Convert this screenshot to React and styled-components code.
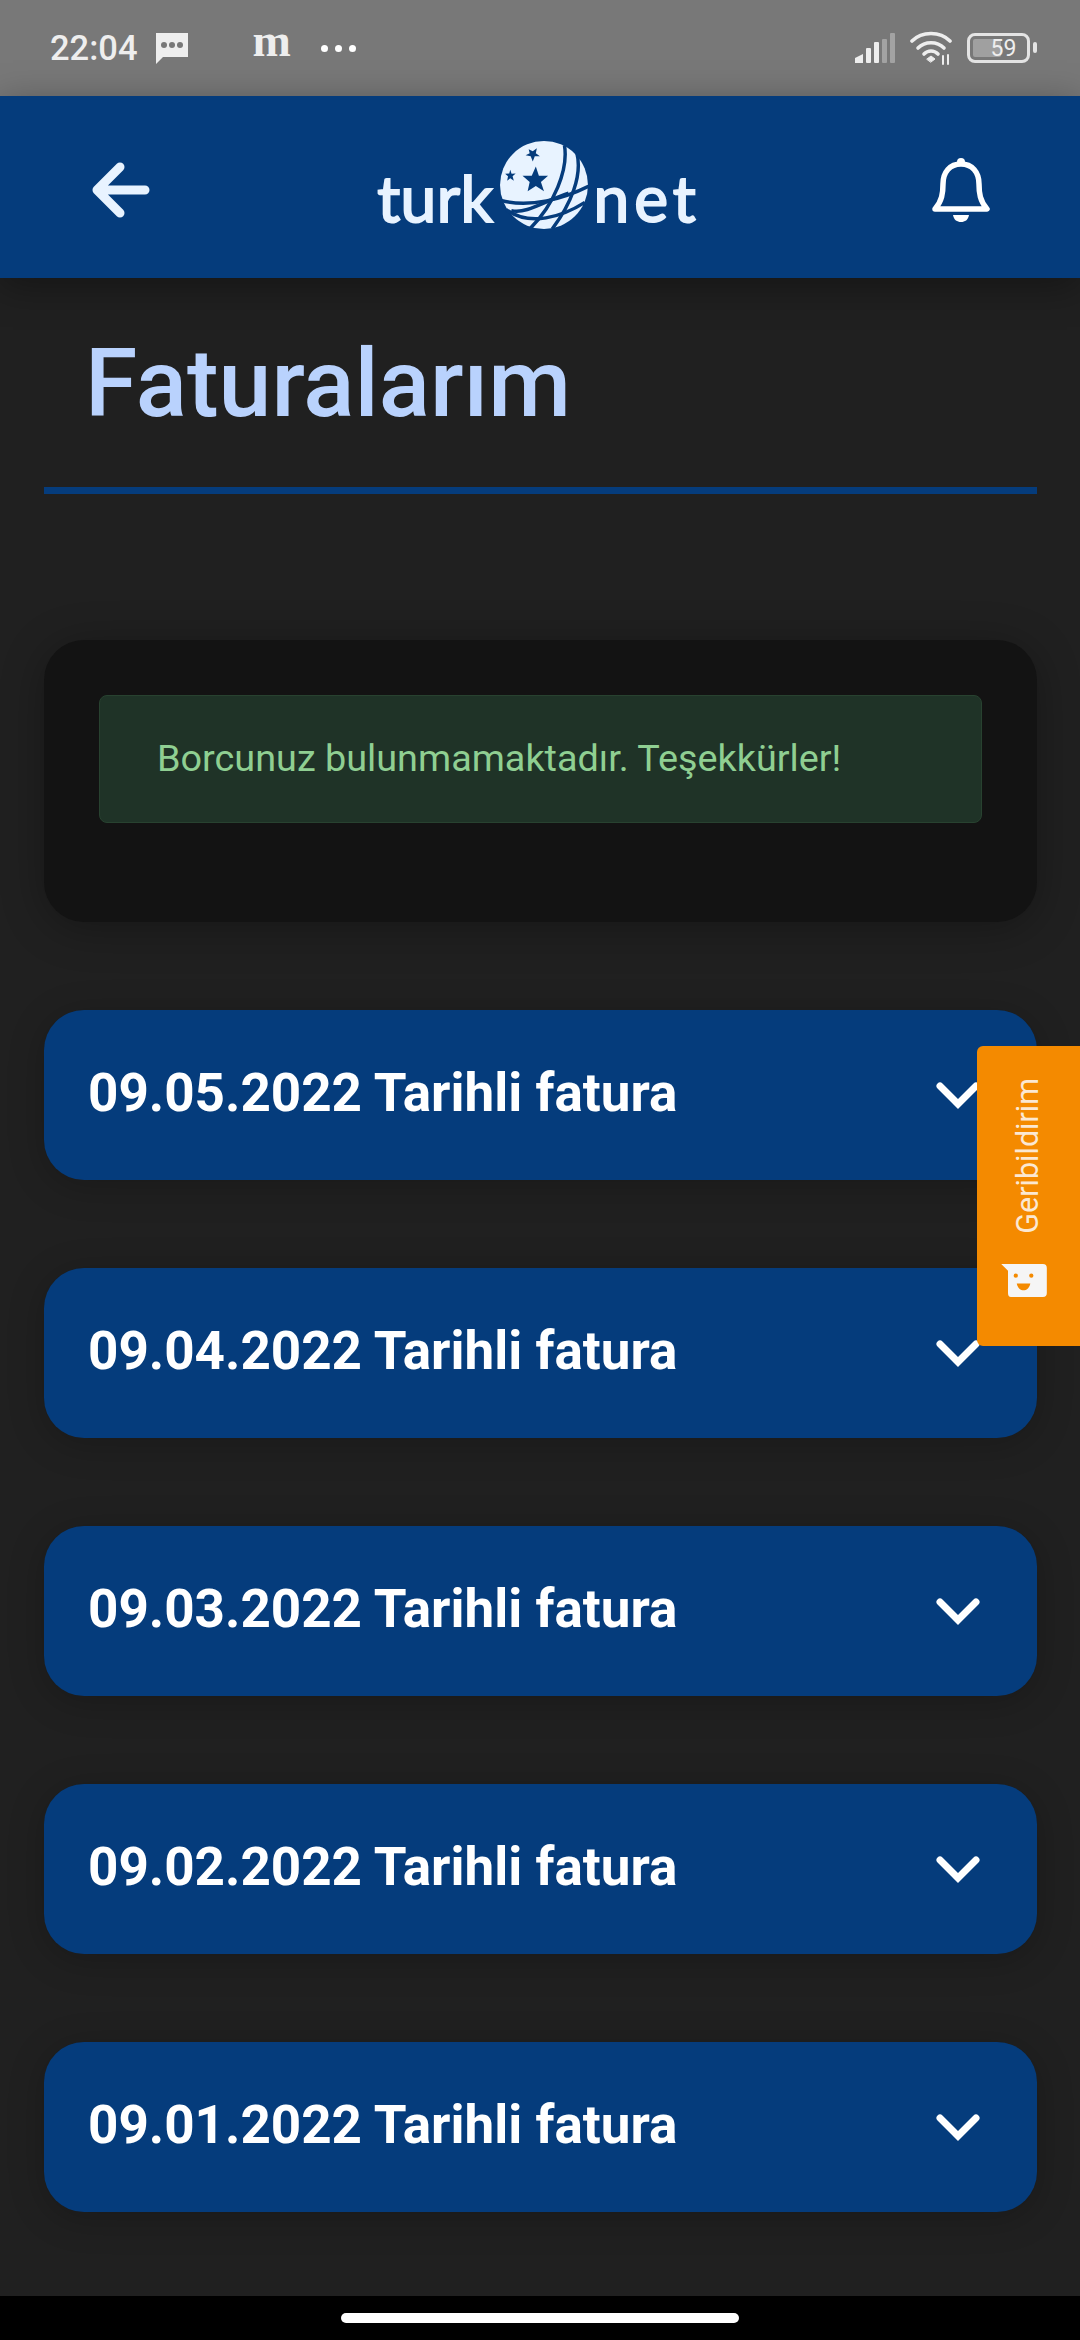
import React from 'react';
import styled, { createGlobalStyle } from 'styled-components';

const GlobalStyle = createGlobalStyle`
  html, body {
    margin: 0;
    padding: 0;
    width: 1080px;
    height: 2340px;
    overflow: hidden;
    background: #202020;
    font-family: Roboto, "Noto Sans", sans-serif;
  }
  * { box-sizing: border-box; }
`;

const Page = styled.div`
  position: relative;
  width: 1080px;
  height: 2340px;
  display: flex;
  flex-direction: column;
  overflow: hidden;
`;

const StatusBar = styled.div`
  height: 96px;
  flex: none;
  background: #787878;
  display: flex;
  align-items: center;
  padding: 0 44px 0 50px;
  color: #eeeeee;
`;

const Time = styled.span`
  font-size: 34.5px;
  font-weight: 500;
  line-height: 1;
`;

const LeftIcons = styled.div`
  display: flex;
  align-items: center;
  margin-left: 17px;
`;

const MailLetter = styled.span`
  font-family: "Liberation Serif", serif;
  font-weight: 700;
  font-size: 46px;
  line-height: 1;
  margin: -14px 0 0 65px;
`;

const Dots = styled.div`
  display: flex;
  gap: 7px;
  margin-left: 30px;
`;

const Dot = styled.i`
  width: 7px;
  height: 7px;
  border-radius: 50%;
  background: #fff;
`;

const RightIcons = styled.div`
  margin-left: auto;
  display: flex;
  align-items: center;
  gap: 15px;
`;

const Battery = styled.div`
  position: relative;
  width: 63px;
  height: 30px;
  border: 3.5px solid #e4e4e4;
  border-radius: 8px;
  margin-right: 6px;
  display: flex;
  align-items: center;
  justify-content: center;
  font-size: 23px;
  color: #eeeeee;
  &::before {
    content: '';
    position: absolute;
    left: 3px;
    top: 3px;
    bottom: 3px;
    width: 28px;
    background: #a0a0a0;
    border-radius: 2px;
  }
  &::after {
    content: '';
    position: absolute;
    right: -10px;
    top: 6px;
    width: 4px;
    height: 11px;
    background: #e4e4e4;
    border-radius: 2px;
  }
`;

const BatteryText = styled.span`
  position: relative;
  margin-left: 10px;
`;

const AppBar = styled.header`
  height: 182px;
  flex: none;
  background: #053c7c;
  display: flex;
  align-items: center;
  justify-content: space-between;
  padding: 5px 90px 0 92px;
  box-shadow: 0 8px 36px rgba(0, 0, 0, 0.35);
  position: relative;
`;

const Logo = styled.div`
  display: flex;
  align-items: center;
  gap: 5px;
  color: #e8f3ff;
  margin: 0 0 10px -4px;
`;

const LogoWord = styled.span`
  font-family: Lato, sans-serif;
  font-weight: 400;
  font-size: 64px;
  line-height: 1;
  letter-spacing: ${(p) => p.$spacing}px;
  margin-top: 26px;
  -webkit-text-stroke: 2px #e8f3ff;
`;

const Main = styled.main`
  flex: 1;
  padding: 0 43px 0 44px;
  display: flex;
  flex-direction: column;
`;

const Title = styled.h1`
  margin: 0;
  padding: 50px 0 0 41px;
  height: 216px;
  border-bottom: 7px solid #053c7c;
  color: #b9d2fd;
  font-size: 95px;
  font-weight: 500;
  line-height: 112px;
`;

const Card = styled.section`
  margin-top: 146px;
  height: 282px;
  border-radius: 40px;
  background: #131313;
  padding: 55px;
  box-shadow: 0 6px 44px rgba(0, 0, 0, 0.3);
`;

const Alert = styled.div`
  height: 128px;
  background: #1f3327;
  border: 1px solid #284230;
  border-radius: 8px;
  padding: 0 57px 2px;
  display: flex;
  align-items: center;
  color: #8fcf92;
  font-size: 37.8px;
`;

const List = styled.div`
  margin-top: 88px;
  display: flex;
  flex-direction: column;
  gap: 88px;
`;

const Row = styled.div`
  height: 170px;
  border-radius: 40px;
  background: #053c7c;
  display: flex;
  align-items: center;
  justify-content: space-between;
  padding: 0 57px 0 44px;
  color: #ffffff;
  box-shadow: 0 6px 36px rgba(0, 0, 0, 0.22);
`;

const RowLabel = styled.span`
  font-size: 53px;
  font-weight: 700;
  margin-bottom: 4px;
`;

const NavBar = styled.div`
  height: 44px;
  flex: none;
  background: #000;
  display: flex;
  justify-content: center;
  padding-top: 17px;
`;

const HomePill = styled.div`
  width: 398px;
  height: 10px;
  border-radius: 5px;
  background: #fff;
`;

const Feedback = styled.aside`
  position: absolute;
  right: 0;
  top: 1046px;
  width: 103px;
  height: 300px;
  background: #f48a00;
  border-radius: 6px 0 0 6px;
  display: flex;
  flex-direction: column;
  align-items: center;
  justify-content: space-between;
  padding: 32px 0 49px;
`;

const FeedbackLabel = styled.span`
  writing-mode: vertical-rl;
  transform: rotate(180deg);
  color: #fbe8d2;
  font-size: 30.5px;
  line-height: 1;
`;

const FeedbackSvg = styled.svg`
  margin-right: 8px;
`;

const BackIcon = () => (
  <svg width="58" height="56" viewBox="0 0 58 56" fill="none" stroke="#e8f3ff" strokeWidth="9" strokeLinecap="round" strokeLinejoin="round">
    <path d="M28 5 L5 28 L28 51 M5 28 H53" />
  </svg>
);

const BellIcon = () => (
  <svg width="58" height="66" viewBox="0 0 58 66" fill="none">
    <circle cx="29" cy="5" r="4" fill="#fff" />
    <path d="M3 52 C10 44 11 36 11 27 C11 15 18 7 29 7 C40 7 47 15 47 27 C47 36 48 44 55 52 Z" stroke="#fff" strokeWidth="5.5" strokeLinejoin="round" />
    <path d="M21 58 H37 C36 63 33 65 29 65 C25 65 22 63 21 58 Z" fill="#fff" />
  </svg>
);

const Globe = () => (
  <svg width="90" height="88" viewBox="0 0 88 86">
    <circle cx="44" cy="43" r="43" fill="#e8f3ff" />
    <g fill="#053c7c">
      <path d="M29 8 l4 2 4 -3 -1 5 4 3 -5 0 -2 5 -2 -5 -5 -1 4 -2z" />
      <path d="M36 25 l3 9 9 0 -7 6 3 9 -8 -5 -8 5 2 -9 -7 -6 9 0z" />
      <path d="M11 28 l1.3 4 4 -.3 -3 2.8 1.2 4.3 -3.5 -2.3 -3 2.3 .8 -4.3 -2.8 -2.5 4 -.2z" />
    </g>
    <g fill="none" stroke="#053c7c" strokeWidth="3.4">
      <path d="M64 4 C68 28 54 62 30 86" />
      <path d="M76 11 C82 34 70 62 52 86" />
      <path d="M2 58 C30 66 64 56 88 44" />
      <path d="M7 67 C30 84 62 74 84 60" />
      <path d="M12 68 C26 72 46 58 68 51" />
    </g>
  </svg>
);

const MessageIcon = () => (
  <svg width="33" height="32" viewBox="0 0 33 32" style={{ display: 'block' }}>
    <path d="M1 1 H33 V25 H8 L1 32 Z" fill="#eeeeee" />
    <g fill="#787878">
      <circle cx="9" cy="13" r="3" />
      <circle cx="17" cy="13" r="3" />
      <circle cx="25" cy="13" r="3" />
    </g>
  </svg>
);

const SignalIcon = () => (
  <svg width="40" height="30" viewBox="0 0 40 30" style={{ display: 'block' }}>
    <path d="M0 30 V25 L8 21 V30 Z" fill="#eeeeee" />
    <rect x="11" y="15" width="5" height="15" rx="1" fill="#eeeeee" />
    <rect x="19" y="9" width="5" height="21" rx="1" fill="#eeeeee" />
    <rect x="27" y="6" width="5" height="24" rx="1" fill="#a3a3a3" />
    <rect x="35" y="0" width="5" height="30" rx="1" fill="#a3a3a3" />
  </svg>
);

const WifiIcon = () => (
  <svg width="42" height="34" viewBox="0 0 42 34" fill="none" stroke="#eeeeee" strokeWidth="3.6" strokeLinecap="round" style={{ display: 'block' }}>
    <path d="M2 10 C12 0 30 0 40 10" />
    <path d="M8 17 C15 10 27 10 34 17" />
    <path d="M14 23 C18 19 24 19 28 23" />
    <path d="M17 28 L21 25 L25 28 L21 31 Z" fill="#eeeeee" strokeWidth="1" />
    <path d="M33 25 V33 M38 24 V33" stroke="#eeeeee" strokeWidth="2" />
  </svg>
);

const Chevron = () => (
  <svg width="44" height="27" viewBox="0 0 44 27" fill="none" stroke="#fff" strokeWidth="7" strokeLinecap="round" strokeLinejoin="miter">
    <path d="M4 4 L22 22 L40 4" />
  </svg>
);

const FeedbackIcon = () => (
  <FeedbackSvg width="47" height="33" viewBox="0 0 48 34">
    <path d="M0 0 H43 Q47 0 47 4 V30 Q47 34 43 34 H10 Q7 34 7 30 V7 Z" fill="#f5f5f5" />
    <circle cx="15" cy="12" r="2.2" fill="#f48a00" />
    <circle cx="31" cy="12" r="2.2" fill="#f48a00" />
    <path d="M16 20 H30 C29 25 26 27 23 27 C20 27 17 25 16 20 Z" fill="#f48a00" />
  </FeedbackSvg>
);

const invoices = ['09.05.2022', '09.04.2022', '09.03.2022', '09.02.2022', '09.01.2022'];

const App = () => {
  return (
    <Page>
      <GlobalStyle />
      <StatusBar>
        <Time>22:04</Time>
        <LeftIcons>
          <MessageIcon />
          <MailLetter>m</MailLetter>
          <Dots><Dot /><Dot /><Dot /></Dots>
        </LeftIcons>
        <RightIcons>
          <SignalIcon />
          <WifiIcon />
          <Battery><BatteryText>59</BatteryText></Battery>
        </RightIcons>
      </StatusBar>
      <AppBar>
        <BackIcon />
        <Logo>
          <LogoWord $spacing={0.5}>turk</LogoWord>
          <Globe />
          <LogoWord $spacing={5}>net</LogoWord>
        </Logo>
        <BellIcon />
      </AppBar>
      <Main>
        <Title>Faturalarım</Title>
        <Card>
          <Alert>Borcunuz bulunmamaktadır. Teşekkürler!</Alert>
        </Card>
        <List>
          {invoices.map((date) => (
            <Row key={date}>
              <RowLabel>{date} Tarihli fatura</RowLabel>
              <Chevron />
            </Row>
          ))}
        </List>
      </Main>
      <NavBar><HomePill /></NavBar>
      <Feedback>
        <FeedbackLabel>Geribildirim</FeedbackLabel>
        <FeedbackIcon />
      </Feedback>
    </Page>
  );
};

export default App;
